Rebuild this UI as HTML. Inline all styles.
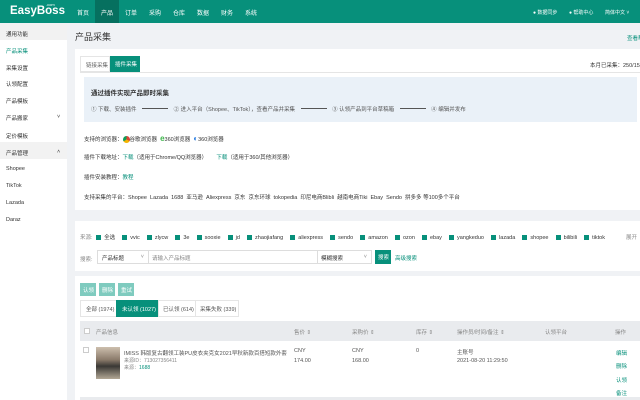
<!DOCTYPE html>
<html><head><meta charset="utf-8"><style>
*{box-sizing:border-box;margin:0;padding:0}
body{width:640px;height:400px;overflow:hidden;background:#f0f2f5;font-family:"Liberation Sans","Noto Sans CJK SC",sans-serif;font-size:5.5px;color:#333;position:relative}
.a{position:absolute;white-space:nowrap}
.hd{position:absolute;left:0;top:0;width:640px;height:23px;background:#07907b}
.t{color:#07907b}
.cb{display:inline-block;width:5px;height:5px;background:#07907b;vertical-align:-1px;margin-right:3px}
.g{color:#888}
</style></head><body>
<div class="hd"></div>
<div class="a" style="left:10px;top:5px;color:#fff;font-size:11.5px;font-weight:bold">EasyBoss</div>
<div class="a" style="left:46px;top:2px;color:#fff;font-size:4px">.com</div>
<div class="a" style="left:95px;top:0;width:24px;height:23px;background:#06705f"></div>
<div class="a" style="left:77px;top:8px;color:#fff;font-size:6px">首页</div>
<div class="a" style="left:101px;top:8px;color:#fff;font-size:6px">产品</div>
<div class="a" style="left:125px;top:8px;color:#fff;font-size:6px">订单</div>
<div class="a" style="left:149px;top:8px;color:#fff;font-size:6px">采购</div>
<div class="a" style="left:173px;top:8px;color:#fff;font-size:6px">仓库</div>
<div class="a" style="left:197px;top:8px;color:#fff;font-size:6px">数据</div>
<div class="a" style="left:221px;top:8px;color:#fff;font-size:6px">财务</div>
<div class="a" style="left:245px;top:8px;color:#fff;font-size:6px">系统</div>
<div class="a" style="left:533px;top:9px;color:#fff;font-size:5px">● 数据同步</div>
<div class="a" style="left:569px;top:9px;color:#fff;font-size:5px">● 帮助中心</div>
<div class="a" style="left:605px;top:9px;color:#fff;font-size:5px">简体中文 ˅</div>
<div class="a" style="left:0;top:24px;width:67px;height:376px;background:#fff"></div>
<div class="a" style="left:0;top:24px;width:67px;height:16px;background:#f2f2f2"></div>
<div class="a" style="left:0;top:142px;width:67px;height:17px;background:#f2f2f2"></div>
<div class="a" style="left:6px;top:30px">通用功能</div>
<div class="a t" style="left:6px;top:47px">产品采集</div>
<div class="a" style="left:6px;top:64px">采集设置</div>
<div class="a" style="left:6px;top:80px">认领配置</div>
<div class="a" style="left:6px;top:97px">产品模板</div>
<div class="a" style="left:6px;top:114px">产品搬家</div><div class="a" style="left:57px;top:114px">˅</div>
<div class="a" style="left:6px;top:132px">定价模板</div>
<div class="a" style="left:6px;top:149px">产品管理</div><div class="a" style="left:57px;top:149px">˄</div>
<div class="a" style="left:6px;top:166px">Shopee</div>
<div class="a" style="left:6px;top:183px">TikTok</div>
<div class="a" style="left:6px;top:200px">Lazada</div>
<div class="a" style="left:6px;top:217px">Daraz</div>
<div class="a" style="left:75px;top:30px;font-size:9px">产品采集</div>
<div class="a t" style="left:627px;top:34px">查看帮</div>
<div class="a" style="left:75px;top:49px;width:565px;height:161px;background:#fff"></div>
<div class="a" style="left:80px;top:56px;width:30px;height:16px;border:1px solid #e5e5e5;padding:4px 5px;color:#666">链接采集</div>
<div class="a" style="left:110px;top:56px;width:30px;height:16px;background:#07907b;color:#fff;padding:4px 5px">插件采集</div>
<div class="a" style="left:80px;top:72px;width:560px;height:1px;background:#e5e5e5"></div>
<div class="a" style="left:590px;top:61px">本月已采集：250/1500</div>
<div class="a" style="left:84px;top:77px;width:553px;height:45px;background:#eaf1f8"></div>
<div class="a" style="left:91px;top:87px;font-size:6.5px;font-weight:bold">通过插件实现产品即时采集</div>
<div class="a" style="left:91px;top:105px;color:#555">① 下载、安装插件 <span style="display:inline-block;width:26px;height:1px;background:#555;vertical-align:2px;margin:0 4px"></span> ② 进入平台（Shopee、TikTok），查看产品并采集 <span style="display:inline-block;width:26px;height:1px;background:#555;vertical-align:2px;margin:0 4px"></span> ③ 认领产品到平台草稿箱 <span style="display:inline-block;width:26px;height:1px;background:#555;vertical-align:2px;margin:0 4px"></span> ④ 编辑并发布</div>
<div class="a" style="left:84px;top:134px">支持的浏览器：<span style="display:inline-block;width:7px;height:7px;border-radius:50%;background:conic-gradient(#db4437 0 33%,#f4b400 0 66%,#0f9d58 0);vertical-align:-2px"></span>谷歌浏览器 &nbsp;<span style="color:#3cb54a;font-weight:bold;font-size:8px">e</span>360浏览器 &nbsp;<span style="color:#2a7de1;font-weight:bold;font-size:8px">◐</span>360浏览器</div>
<div class="a" style="left:84px;top:153px">插件下载地址：<span class="t">下载</span>（适用于Chrome/QQ浏览器） &nbsp; &nbsp; &nbsp;<span class="t">下载</span>（适用于360/其他浏览器）</div>
<div class="a" style="left:84px;top:173px">插件安装教程：<span class="t">教程</span></div>
<div class="a" style="left:84px;top:193px">支持采集的平台：Shopee &nbsp;Lazada &nbsp;1688 &nbsp;亚马逊 &nbsp;Aliexpress &nbsp;京东 &nbsp;京东环球 &nbsp;tokopedia &nbsp;印尼电商Blibli &nbsp;越南电商Tiki &nbsp;Ebay &nbsp;Sendo &nbsp;拼多多 等100多个平台</div>
<div class="a" style="left:75px;top:221px;width:565px;height:50px;background:#fff"></div>
<div class="a g" style="left:80px;top:233px;word-spacing:0.25px">来源: &nbsp;<span style="color:#333"><span class="cb"></span>全选 &nbsp; &nbsp;<span class="cb"></span>vvic &nbsp; &nbsp;<span class="cb"></span>zlycw &nbsp; &nbsp;<span class="cb"></span>3e &nbsp; &nbsp;<span class="cb"></span>sooxie &nbsp; &nbsp;<span class="cb"></span>jd &nbsp; &nbsp;<span class="cb"></span>zhaojiafang &nbsp; &nbsp;<span class="cb"></span>aliexpress &nbsp; &nbsp;<span class="cb"></span>sendo &nbsp; &nbsp;<span class="cb"></span>amazon &nbsp; &nbsp;<span class="cb"></span>ozon &nbsp; &nbsp;<span class="cb"></span>ebay &nbsp; &nbsp;<span class="cb"></span>yangkeduo &nbsp; &nbsp;<span class="cb"></span>lazada &nbsp; &nbsp;<span class="cb"></span>shopee &nbsp; &nbsp;<span class="cb"></span>bilibili &nbsp; &nbsp;<span class="cb"></span>tiktok</span></div>
<div class="a g" style="left:626px;top:233px">展开</div>
<div class="a g" style="left:80px;top:255px">搜索:</div>
<div class="a" style="left:97px;top:250px;width:52px;height:14px;border:1px solid #ddd;padding:3px 4px">产品标题<span class="g" style="position:absolute;right:4px">˅</span></div>
<div class="a g" style="left:148px;top:250px;width:170px;height:14px;border:1px solid #ddd;padding:3px 3px">请输入产品标题</div>
<div class="a" style="left:317px;top:250px;width:55px;height:14px;border:1px solid #ddd;padding:3px 3px">模糊搜索<span class="g" style="position:absolute;right:4px">˅</span></div>
<div class="a" style="left:375px;top:250px;width:16px;height:14px;background:#07907b;color:#fff;padding:3px 3px">搜索</div>
<div class="a t" style="left:395px;top:254px">高级搜索</div>
<div class="a" style="left:75px;top:276px;width:565px;height:124px;background:#fff"></div>
<div class="a" style="left:80px;top:283px;width:16px;height:13px;background:#7fcbbf;color:#fff;padding:3px 3px">认领</div>
<div class="a" style="left:99px;top:283px;width:16px;height:13px;background:#7fcbbf;color:#fff;padding:3px 3px">删除</div>
<div class="a" style="left:118px;top:283px;width:16px;height:13px;background:#7fcbbf;color:#fff;padding:3px 3px">重试</div>
<div class="a" style="left:80px;top:300px;width:159px;height:17px;border:1px solid #e5e5e5"></div>
<div class="a" style="left:86px;top:305px;color:#555">全部 (1974)</div>
<div class="a" style="left:116px;top:300px;width:42px;height:17px;background:#07907b;color:#fff;padding:5px 6px">未认领 (1027)</div>
<div class="a" style="left:158px;top:300px;width:1px;height:17px;background:#e5e5e5"></div>
<div class="a" style="left:195px;top:300px;width:1px;height:17px;background:#e5e5e5"></div>
<div class="a" style="left:163px;top:305px;color:#555">已认领 (614)</div>
<div class="a" style="left:200px;top:305px;color:#555">采集失败 (339)</div>
<div class="a" style="left:80px;top:321px;width:560px;height:20px;background:#e9ebee"></div>
<div class="a" style="left:84px;top:328px;width:6px;height:6px;border:1px solid #ccc;background:#fff"></div>
<div class="a g" style="left:96px;top:328px">产品信息</div>
<div class="a g" style="left:294px;top:328px">售价 ⇕</div>
<div class="a g" style="left:352px;top:328px">采购价 ⇕</div>
<div class="a g" style="left:416px;top:328px">库存 ⇕</div>
<div class="a g" style="left:457px;top:328px">操作员/时间/备注 ⇕</div>
<div class="a g" style="left:545px;top:328px">认领平台</div>
<div class="a g" style="left:615px;top:328px">操作</div>
<div class="a" style="left:83px;top:347px;width:6px;height:6px;border:1px solid #ccc"></div>
<div class="a" style="left:96px;top:347px;width:24px;height:32px;background:linear-gradient(180deg,#cdbfae,#8a7a6a 40%,#3a3835 60%,#b2a795)"></div>
<div class="a" style="left:124px;top:349px;color:#555">IMISS 韩版复古翻领工装PU皮衣夹克女2021早秋新款百搭短款外套</div>
<div class="a g" style="left:124px;top:357px;font-size:5px">来源ID：713027356411</div>
<div class="a g" style="left:124px;top:364px;font-size:5px">来源：<span class="t">1688</span></div>
<div class="a" style="left:294px;top:348px;color:#555">CNY</div>
<div class="a" style="left:294px;top:358px;color:#555">174.00</div>
<div class="a" style="left:352px;top:348px;color:#555">CNY</div>
<div class="a" style="left:352px;top:358px;color:#555">168.00</div>
<div class="a" style="left:416px;top:348px;color:#555">0</div>
<div class="a" style="left:457px;top:348px;color:#555">主账号</div>
<div class="a" style="left:457px;top:358px;color:#555">2021-08-20 11:29:50</div>
<div class="a t" style="left:616px;top:349px">编辑</div>
<div class="a t" style="left:616px;top:362px">删除</div>
<div class="a t" style="left:616px;top:376px">认领</div>
<div class="a t" style="left:616px;top:389px">备注</div>
<div class="a" style="left:80px;top:397px;width:560px;height:3px;background:#e9ebee"></div>
</body></html>
